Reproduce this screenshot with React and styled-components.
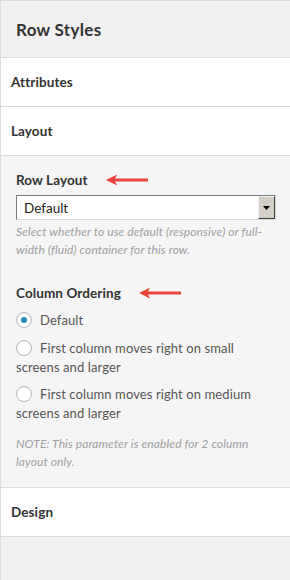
import React from 'react'
import styled, { createGlobalStyle } from 'styled-components'

const GlobalStyle = createGlobalStyle`
  html, body {
    margin: 0;
    padding: 0;
    background: #f1f1f1;
  }
  body {
    font-family: Lato, "Open Sans", sans-serif;
  }
`

const Panel = styled.div`
  width: 290px;
  min-height: 580px;
  box-sizing: border-box;
  border-left: 1px solid #dcdcdc;
  border-top: 1px solid #dcdcdc;
  background: #f1f1f1;
`

const Header = styled.div`
  height: 56px;
  display: flex;
  align-items: center;
  padding-left: 15px;
  font-size: 17px;
  letter-spacing: 0.3px;
  font-weight: 700;
  color: #333;
  border-bottom: 1px solid #dcdcdc;
`

const SectionRow = styled.div`
  height: 48px;
  display: flex;
  align-items: center;
  padding-left: 10px;
  background: #fff;
  font-size: 13.5px;
  letter-spacing: 0.1px;
  font-weight: 700;
  color: #333;
  border-bottom: 1px solid #dcdcdc;
`

const Body = styled.div`
  background: #f5f5f5;
  padding: 15px 14px 16px 15px;
  border-bottom: 1px solid #dcdcdc;
`

const FieldTitle = styled.div`
  display: flex;
  align-items: center;
  gap: 18px;
  font-size: 13.5px;
  letter-spacing: 0.1px;
  line-height: 18px;
  font-weight: 700;
  color: #333;
  margin-top: ${p => p.$top || 0}px;
`

const Arrow = () => (
  <svg width="42" height="12" viewBox="0 0 42 12">
    <path d="M0 6 L11 0.5 L9 4.5 L42 4.5 L42 7.5 L9 7.5 L11 11.5 Z" fill="#e8453c" />
  </svg>
)

const Select = styled.div`
  margin-top: 6px;
  height: 25px;
  box-sizing: border-box;
  display: flex;
  align-items: stretch;
  background: #fff;
  border: 1px solid #7a7a7a;
  border-right-color: #d8d8d8;
  border-bottom-color: #d8d8d8;
`

const SelectValue = styled.div`
  flex: 1;
  display: flex;
  align-items: center;
  padding-left: 7px;
  font-size: 13.5px;
  color: #222;
`

const SelectButton = styled.div`
  width: 17px;
  box-sizing: border-box;
  background: #d4d0c8;
  border: 1px solid;
  border-color: #f4f4f4 #404040 #404040 #f4f4f4;
  display: flex;
  align-items: center;
  justify-content: center;
`

const Help = styled.p`
  margin: 3px 0 0;
  font-size: 12px;
  letter-spacing: 0.1px;
  line-height: 18px;
  font-style: italic;
  color: #a0a0a0;
`

const RadioItem = styled.label`
  display: block;
  margin-top: ${p => p.$top}px;
  font-size: 13px;
  letter-spacing: 0.1px;
  line-height: 19px;
  color: #555;
`

const RadioDot = styled.span`
  display: inline-block;
  vertical-align: -3px;
  width: 16px;
  height: 16px;
  box-sizing: border-box;
  border-radius: 50%;
  border: 1px solid #b4b9be;
  background: #fff;
  box-shadow: inset 0 1px 2px rgba(0, 0, 0, 0.07);
  margin-right: 8px;
  position: relative;
  &::after {
    content: '';
    display: ${p => (p.$checked ? 'block' : 'none')};
    position: absolute;
    left: 4px;
    top: 4px;
    width: 6px;
    height: 6px;
    border-radius: 50%;
    background: #1e8cbe;
  }
`

const Note = styled(Help)`
  margin-top: 12px;
`

export default function App() {
  return (
    <>
      <GlobalStyle />
      <Panel>
        <Header>Row Styles</Header>
        <SectionRow>Attributes</SectionRow>
        <SectionRow>Layout</SectionRow>
        <Body>
          <FieldTitle>
            Row Layout <Arrow />
          </FieldTitle>
          <Select>
            <SelectValue>Default</SelectValue>
            <SelectButton>
              <svg width="7" height="4" viewBox="0 0 7 4">
                <path d="M0 0 H7 L3.5 4 Z" fill="#000" />
              </svg>
            </SelectButton>
          </Select>
          <Help>
            Select whether to use default (responsive) or full-width (fluid) container for this row.
          </Help>
          <FieldTitle $top={25}>
            Column Ordering <Arrow />
          </FieldTitle>
          <RadioItem $top={9}>
            <RadioDot $checked />
            Default
          </RadioItem>
          <RadioItem $top={9}>
            <RadioDot />
            First column moves right on small screens and larger
          </RadioItem>
          <RadioItem $top={8}>
            <RadioDot />
            First column moves right on medium screens and larger
          </RadioItem>
          <Note>NOTE: This parameter is enabled for 2 column layout only.</Note>
        </Body>
        <SectionRow>Design</SectionRow>
      </Panel>
    </>
  )
}
